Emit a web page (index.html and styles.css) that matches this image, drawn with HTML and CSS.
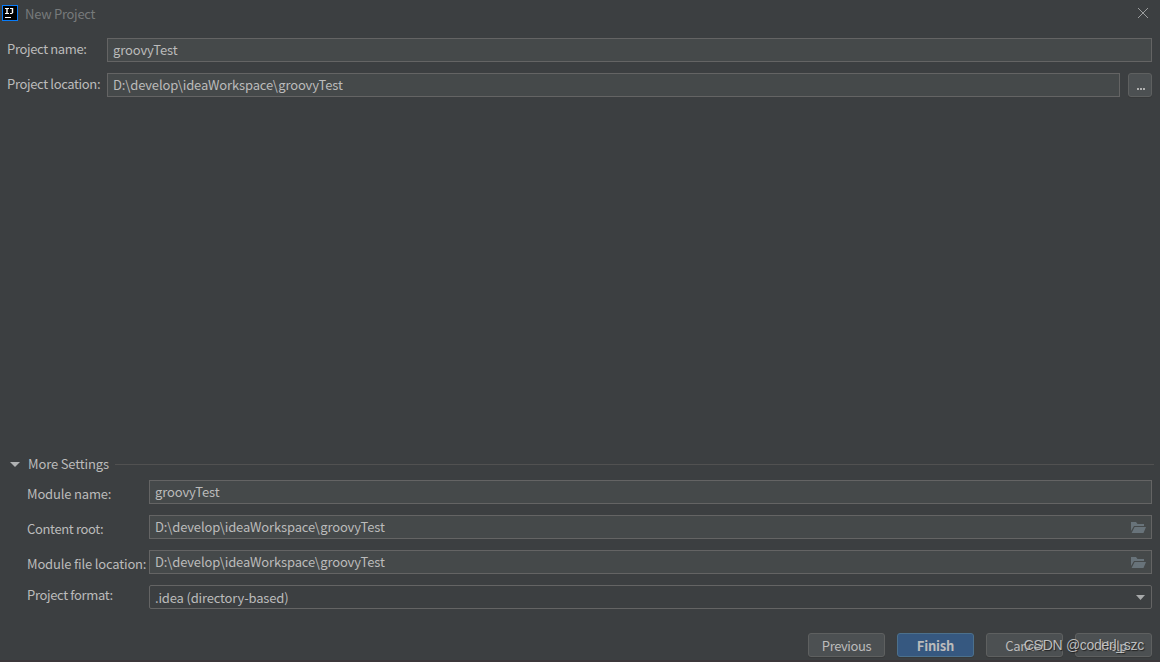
FILE: index.html
```
<!DOCTYPE html>
<html lang="en">
<head>
    <meta charset="UTF-8">
    <meta name="viewport" content="width=device-width, initial-scale=1.0">
    <title>New Project</title>
    <link rel="stylesheet" href="styles.css">
</head>
<body>
    <div class="dialog">
        <div class="titlebar">
            <svg class="logo" width="16" height="16" viewBox="0 0 16 16">
                <rect width="16" height="16" fill="#087cfa"/>
                <rect x="1" y="1" width="14" height="14" fill="#000"/>
                <path d="M3 3.5h4M3 8.5h4M8 3.5h3M8 8.5h2.5M3 12.5h6" fill="none" stroke="#fff"/>
                <path d="M5 3v5.5M10.5 3v5" fill="none" stroke="#fff" stroke-width="1.4"/>
            </svg>
            <span class="title">New Project</span>
            <svg class="close" width="10" height="10" viewBox="0 0 10 10">
                <path d="M0 0l10 10M10 0L0 10" stroke="#9b9d9e" fill="none"/>
            </svg>
        </div>

        <div class="form">
            <div class="row">
                <label>Project name:</label>
                <div class="field">groovyTest</div>
            </div>
            <div class="row">
                <label>Project location:</label>
                <div class="field">D:\develop\ideaWorkspace\groovyTest</div>
                <button class="browse"><i></i><i></i><i></i></button>
            </div>
        </div>

        <div class="more">
            <div class="more-title">
                <svg width="10" height="5" viewBox="0 0 10 5"><path d="M0 0h10L5 5z" fill="#b0b2b3"/></svg>
                <span>More Settings</span>
                <div class="line"></div>
            </div>
            <div class="row">
                <label class="wide">Module name:</label>
                <div class="field">groovyTest</div>
            </div>
            <div class="row">
                <label>Content root:</label>
                <div class="field">D:\develop\ideaWorkspace\groovyTest
                    <svg class="folder" width="15" height="11" viewBox="0 0 15 11"><path d="M0 0h5l1.5 2H13v2H3L0 9zM3.6 5H15l-2.5 6H0.6z" fill="#68737a"/></svg>
                </div>
            </div>
            <div class="row">
                <label class="wide">Module file location:</label>
                <div class="field">D:\develop\ideaWorkspace\groovyTest
                    <svg class="folder" width="15" height="11" viewBox="0 0 15 11"><path d="M0 0h5l1.5 2H13v2H3L0 9zM3.6 5H15l-2.5 6H0.6z" fill="#68737a"/></svg>
                </div>
            </div>
            <div class="row format">
                <label>Project format:</label>
                <div class="field combo">.idea (directory-based)
                    <svg class="arrow" width="9" height="5" viewBox="0 0 9 5"><path d="M0 0h9L4.5 5z" fill="#a7a9aa"/></svg>
                </div>
            </div>
        </div>

        <div class="buttons">
            <button>Previous</button>
            <button class="primary">Finish</button>
            <button>Cancel</button>
            <button>Help</button>
        </div>
        <div class="watermark">CSDN @coderl_szc</div>
    </div>
</body>
</html>
```
FILE: styles.css
```
* {
    box-sizing: border-box;
}

body {
    margin: 0;
    background-color: #3c3f41;
    color: #bbbbbb;
    font-family: "Noto Sans CJK SC", "Noto Sans", sans-serif;
    font-size: 13px;
    line-height: 20px;
    letter-spacing: -0.14px;
    white-space: nowrap;
}

.dialog {
    position: relative;
    display: flex;
    flex-direction: column;
    height: 662px;
    padding-right: 8px;
    overflow: hidden;
    border-bottom: 2px solid #3c383b;
}

.titlebar {
    display: flex;
    align-items: center;
    height: 26px;
    padding: 0 4px 0 2px;
    color: #777a7b;
}

.title {
    flex: 1;
    margin-left: 7px;
    padding-top: 1px;
    letter-spacing: -0.27px;
}

.form {
    display: flex;
    flex-direction: column;
    gap: 11px;
    padding: 12px 0 0 7px;
}

.row {
    display: flex;
    height: 24px;
}

.row label {
    flex: none;
    width: 100px;
    padding-top: 1px;
    letter-spacing: -0.35px;
}

.row .wide {
    letter-spacing: -0.17px;
}

.field {
    display: flex;
    flex: 1;
    align-items: center;
    justify-content: space-between;
    padding: 0 5px 1px;
    background-color: #45494a;
    border: 1px solid #646464;
    line-height: 19px;
}

.folder {
    margin-top: 1px;
}

button {
    display: flex;
    align-items: center;
    justify-content: center;
    width: 77px;
    height: 24px;
    padding: 1px 0 0;
    background-color: #4c5052;
    border: 1px solid #5e6060;
    border-radius: 3px;
    box-shadow: 0 1px 0 #37393a;
    color: #bbbbbb;
    font: inherit;
    letter-spacing: -0.4px;
}

.browse {
    align-items: flex-end;
    gap: 1px;
    width: 24px;
    margin-left: 8px;
    padding: 0 0 6px 1px;
}

.browse i {
    width: 2px;
    height: 2px;
    background-color: #b0b0b0;
}

.more {
    display: flex;
    flex-direction: column;
    gap: 11px;
    margin-top: 357px;
    padding-left: 27px;
}

.more-title {
    display: flex;
    align-items: center;
    height: 20px;
    margin: 0 -2px -5px -17px;
}

.more-title span {
    margin: -1px 6px 0 8px;
}

.line {
    flex: 1;
    height: 1px;
    background-color: #515151;
}

.more .row label {
    width: 122px;
    padding-top: 4px;
}

.more .format label {
    padding-top: 0;
}

.combo {
    padding: 0 6px 0 5px;
    background-color: #3c3f41;
    border-radius: 2px;
    letter-spacing: -0.17px;
}

.buttons {
    display: flex;
    justify-content: flex-end;
    gap: 12px;
    margin-top: 24px;
}

.primary {
    background-color: #365880;
    border-color: #4c708c;
    font-weight: bold;
    letter-spacing: -0.2px;
}

.watermark {
    position: absolute;
    right: 16px;
    bottom: 5px;
    color: rgba(205, 205, 205, 0.9);
    font-family: "Liberation Sans", Arial, sans-serif;
    font-size: 14px;
    letter-spacing: -0.28px;
    text-shadow: 1px 1px 1px #222;
}
```
